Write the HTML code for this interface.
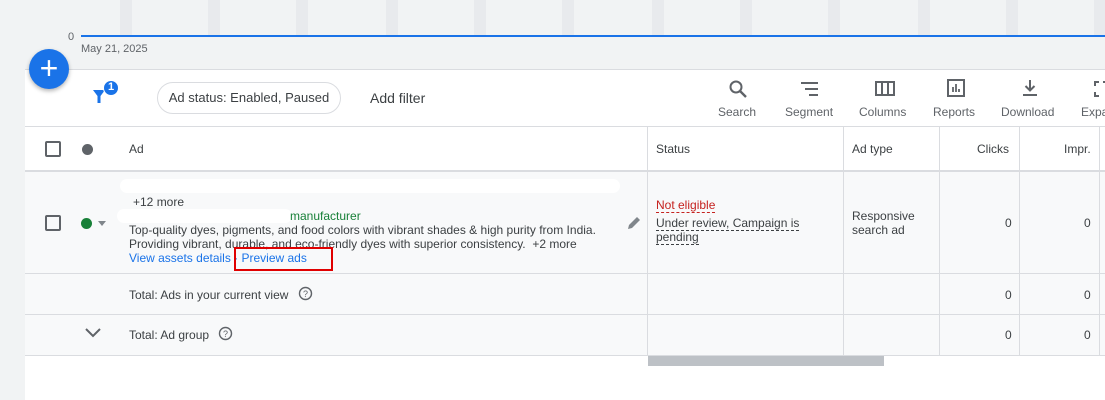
<!DOCTYPE html>
<html><head><style>
*{margin:0;padding:0;box-sizing:border-box}
body{width:1105px;height:400px;overflow:hidden;background:#f1f3f4;font-family:"Liberation Sans",Arial,sans-serif;color:#3c4043;position:relative;font-size:12px}
.a{position:absolute}
.vb{position:absolute;top:0;width:12px;height:36px;background:#e8eaed}
.t{color:#5f6368;font-size:12px}
.hl{position:absolute;height:1px;background:#dadce0;left:25px;width:1080px}
.vl{position:absolute;width:1px;background:#dadce0;top:127px;height:228px}
.n{position:absolute;font-size:12px;color:#3c4043}
</style></head><body>
<div class="vb" style="left:120px"></div><div class="vb" style="left:208px"></div><div class="vb" style="left:296px"></div><div class="vb" style="left:386px"></div><div class="vb" style="left:474px"></div><div class="vb" style="left:562px"></div><div class="vb" style="left:652px"></div><div class="vb" style="left:740px"></div><div class="vb" style="left:828px"></div><div class="vb" style="left:918px"></div><div class="vb" style="left:1006px"></div><div class="vb" style="left:1094px"></div>
<div class="a" style="left:81px;top:35px;width:1024px;height:2px;background:#1a73e8"></div>
<div class="a t" style="left:68px;top:31px;font-size:11px">0</div>
<div class="a t" style="left:81px;top:43px;font-size:11px">May 21, 2025</div>
<div class="a" style="left:25px;top:70px;width:1080px;height:330px;background:#fff"></div>
<div class="hl" style="top:69px"></div>
<div class="a" style="left:29px;top:49px;width:40px;height:40px;border-radius:50%;background:#1a73e8;box-shadow:0 2px 4px rgba(0,0,0,.3);color:#fff;font-size:32px;line-height:38px;text-align:center">+</div>
<svg class="a" style="left:92px;top:86px" width="16" height="20" viewBox="0 0 16 20"><path d="M1 4h12l-4.5 6v7h-3v-7z" fill="#1a73e8"/></svg>
<div class="a" style="left:103px;top:80px;width:16px;height:16px;border-radius:50%;background:#1a73e8;border:1.5px solid #fff;color:#fff;font-size:11px;font-weight:bold;text-align:center;line-height:13px">1</div>
<div class="a" style="left:157px;top:82px;width:184px;height:32px;border:1px solid #dadce0;border-radius:16px;font-size:13px;line-height:30px;text-align:center;color:#3c4043">Ad status: Enabled, Paused</div>
<div class="a" style="left:370px;top:90px;font-size:14px;color:#3c4043">Add filter</div>
<!-- toolbar -->
<svg class="a" style="left:728px;top:79px" width="20" height="20" viewBox="0 0 20 20"><circle cx="8" cy="8" r="5.5" fill="none" stroke="#5f6368" stroke-width="2"/><path d="M12 12l6 6" stroke="#5f6368" stroke-width="2.4"/></svg>
<svg class="a" style="left:800px;top:80px" width="20" height="18" viewBox="0 0 20 18"><path d="M1 3h17M5 9h13M9 15h9" stroke="#5f6368" stroke-width="2"/></svg>
<svg class="a" style="left:875px;top:80px" width="20" height="18" viewBox="0 0 20 18"><rect x="1" y="2" width="18" height="13" fill="none" stroke="#5f6368" stroke-width="2"/><path d="M7 2v13M13 2v13" stroke="#5f6368" stroke-width="2"/></svg>
<svg class="a" style="left:946px;top:78px" width="20" height="20" viewBox="0 0 20 20"><rect x="2" y="2" width="16" height="16" fill="none" stroke="#5f6368" stroke-width="2"/><path d="M7 14V9M10 14V6M13 14v-3" stroke="#5f6368" stroke-width="1.8"/></svg>
<svg class="a" style="left:1020px;top:78px" width="20" height="20" viewBox="0 0 20 20"><path d="M10 2v10M5.5 8l4.5 4.5 4.5-4.5M3 17h14" fill="none" stroke="#5f6368" stroke-width="2"/></svg>
<svg class="a" style="left:1094px;top:80px" width="14" height="18" viewBox="0 0 14 18"><path d="M1 6V2h4M1 12v4h4M9 2h4" fill="none" stroke="#5f6368" stroke-width="2"/></svg>
<div class="a t" style="left:718px;top:105px">Search</div>
<div class="a t" style="left:785px;top:105px">Segment</div>
<div class="a t" style="left:859px;top:105px">Columns</div>
<div class="a t" style="left:933px;top:105px">Reports</div>
<div class="a t" style="left:1001px;top:105px">Download</div>
<div class="a t" style="left:1081px;top:105px">Expa</div>
<!-- table -->
<div class="hl" style="top:126px"></div>
<div class="a" style="left:25px;top:171px;width:1080px;height:184px;background:#f8f9fa"></div>
<div class="a" style="left:25px;top:170px;width:1080px;height:2px;background:#dadce0"></div>
<div class="hl" style="top:273px"></div>
<div class="hl" style="top:314px"></div>
<div class="hl" style="top:355px"></div>
<div class="vl" style="left:647px"></div><div class="vl" style="left:843px"></div><div class="vl" style="left:939px"></div><div class="vl" style="left:1019px"></div><div class="vl" style="left:1099px"></div>
<div class="a" style="left:45px;top:141px;width:16px;height:16px;border:2px solid #5f6368;border-radius:2px"></div>
<div class="a" style="left:82px;top:144px;width:11px;height:11px;border-radius:50%;background:#5f6368"></div>
<div class="n" style="left:129px;top:142px">Ad</div>
<div class="n" style="left:656px;top:142px">Status</div>
<div class="n" style="left:852px;top:142px">Ad type</div>
<div class="n" style="left:977px;top:142px">Clicks</div>
<div class="n" style="left:1064px;top:142px">Impr.</div>
<!-- row -->
<div class="a" style="left:45px;top:215px;width:16px;height:16px;border:2px solid #5f6368;border-radius:2px"></div>
<div class="a" style="left:81px;top:218px;width:11px;height:11px;border-radius:50%;background:#188038"></div>
<div class="a" style="left:98px;top:221px;border:4px solid transparent;border-top:5px solid #80868b"></div>
<div class="a" style="left:120px;top:179px;width:500px;height:14px;border-radius:7px;background:#fff"></div>
<div class="n" style="left:133px;top:195px">+12 more</div>
<div class="a" style="left:117px;top:209px;width:175px;height:14px;border-radius:7px;background:#fff"></div>
<div class="n" style="left:290px;top:209px;color:#188038">manufacturer</div>
<div class="n" style="left:129px;top:223px;line-height:14px">Top-quality dyes, pigments, and food colors with vibrant shades &amp; high purity from India.<br>Providing vibrant, durable, and eco-friendly dyes with superior consistency.&nbsp; +2 more</div>
<div class="n" style="left:129px;top:251px;color:#1a73e8">View assets details · Preview ads</div>
<div class="a" style="left:234px;top:247px;width:99px;height:24px;border:2px solid #e00000"></div>
<svg class="a" style="left:626px;top:215px" width="16" height="16" viewBox="0 0 16 16"><path d="M2 14l1-4 8-8 3 3-8 8z" fill="#80868b"/></svg>
<div class="n" style="left:656px;top:198px;color:#c5221f;border-bottom:1px dashed #c5221f">Not eligible</div>
<div class="n" style="left:656px;top:216px;line-height:14px">
<span style="border-bottom:1px dashed #3c4043">Under review, Campaign is</span><br><span style="border-bottom:1px dashed #3c4043">pending</span></div>
<div class="n" style="left:852px;top:209px;line-height:14px">Responsive<br>search ad</div>
<div class="n" style="left:1005px;top:216px">0</div><div class="n" style="left:1084px;top:216px">0</div>
<div class="n" style="left:129px;top:288px">Total: Ads in your current view</div>
<svg class="a" style="left:298px;top:286px" width="15" height="15" viewBox="0 0 15 15"><circle cx="7.5" cy="7.5" r="6" fill="none" stroke="#5f6368" stroke-width="1.4"/><text x="7.5" y="11" font-size="9" text-anchor="middle" fill="#5f6368" font-family="Liberation Sans">?</text></svg>
<div class="n" style="left:1005px;top:288px">0</div><div class="n" style="left:1084px;top:288px">0</div>
<svg class="a" style="left:84px;top:327px" width="18" height="12" viewBox="0 0 18 12"><path d="M2 2l7 7 7-7" fill="none" stroke="#5f6368" stroke-width="2"/></svg>
<div class="n" style="left:129px;top:328px">Total: Ad group</div>
<svg class="a" style="left:218px;top:326px" width="15" height="15" viewBox="0 0 15 15"><circle cx="7.5" cy="7.5" r="6" fill="none" stroke="#5f6368" stroke-width="1.4"/><text x="7.5" y="11" font-size="9" text-anchor="middle" fill="#5f6368" font-family="Liberation Sans">?</text></svg>
<div class="n" style="left:1005px;top:328px">0</div><div class="n" style="left:1084px;top:328px">0</div>
<div class="a" style="left:648px;top:356px;width:236px;height:10px;background:#bdc1c6"></div>
</body></html>
